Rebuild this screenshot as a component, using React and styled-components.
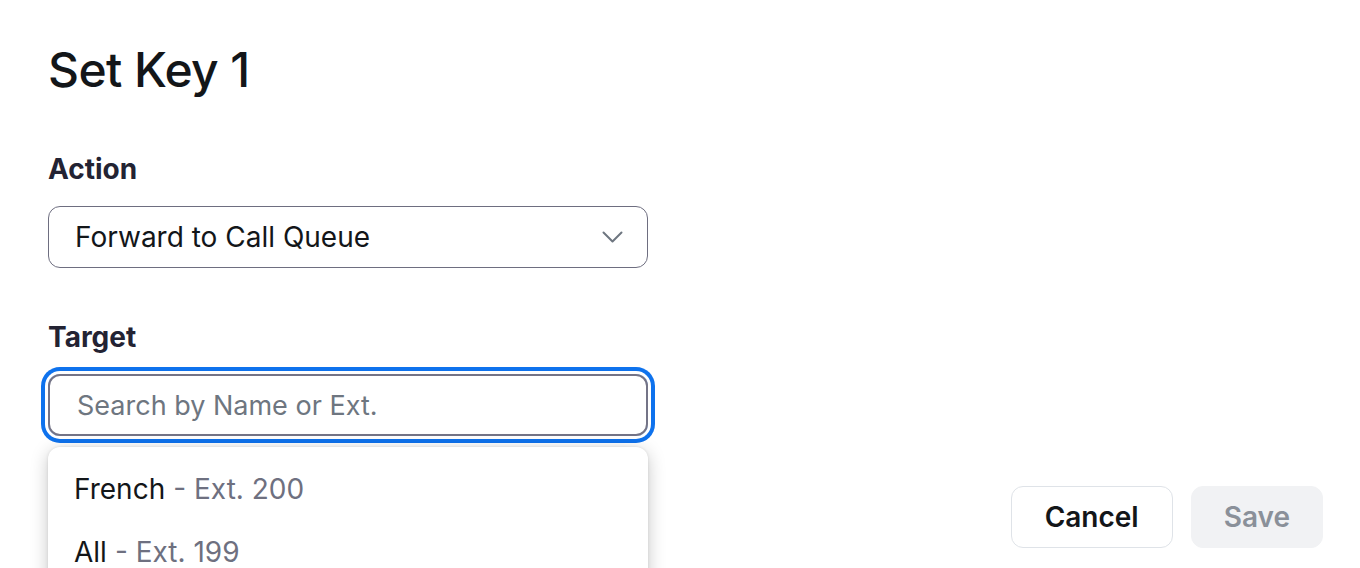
import styled, { createGlobalStyle } from "styled-components";

const GlobalStyle = createGlobalStyle`
    html, body {
        margin: 0;
        padding: 0;
        background: #ffffff;
        font-family: Inter, "Noto Sans", sans-serif;
        color: #131619;
        overflow: hidden;
    }
`

const Page = styled.div`
    display: flex;
    flex-direction: column;
    padding: 38px 37px 0 48px;
    height: 568px;
    box-sizing: border-box;
`

const Title = styled.h1`
    margin: 0;
    font-size: 48px;
    font-weight: 500;
    letter-spacing: -0.6px;
    line-height: 64px;
    color: #131619;
`

const Field = styled.div`
    display: flex;
    flex-direction: column;
    width: 600px;
    margin-top: ${(p) => p.$top}px;
    position: relative;
`

const Label = styled.label`
    font-size: 28px;
    font-weight: 700;
    line-height: 34px;
    color: #232333;
    margin-bottom: 20px;
`

const SelectBox = styled.div`
    display: flex;
    align-items: center;
    justify-content: space-between;
    height: 62px;
    box-sizing: border-box;
    padding: 0 24px 0 26px;
    border: 1.5px solid #6e6e80;
    border-radius: 12px;
    font-size: 28px;
    color: #131619;
`

const InputWrap = styled.div`
    border-radius: 12px;
    box-shadow: 0 0 0 3px #ffffff, 0 0 0 7px #0e72ed;
`

const SearchInput = styled.input`
    display: block;
    width: 100%;
    height: 62px;
    box-sizing: border-box;
    padding: 0 27px;
    border: 2px solid #747487;
    border-radius: 12px;
    font-family: Inter, "Noto Sans", sans-serif;
    font-size: 27px;
    color: #131619;
    outline: none;

    &::placeholder {
        color: #6e7680;
    }
`

const Menu = styled.ul`
    position: absolute;
    left: 0;
    right: 0;
    top: 100%;
    margin: 11px 0 0 0;
    padding: 10px 0;
    list-style: none;
    background: #ffffff;
    border-radius: 12px;
    box-shadow: 0 4px 18px rgba(0, 0, 0, 0.22), 0 0 3px rgba(0, 0, 0, 0.1);
    z-index: 2;
`

const MenuItem = styled.li`
    display: flex;
    align-items: center;
    height: 63px;
    padding: 0 26px;
    font-size: 28px;
    color: #131619;
`

const Ext = styled.span`
    color: #6e7080;
    margin-left: 8px;
`

const Footer = styled.div`
    display: flex;
    justify-content: flex-end;
    gap: 18px;
    margin-top: 50px;
`

const Button = styled.button`
    height: 62px;
    padding: 0 ${(p) => (p.$primary ? 32 : 33)}px;
    border-radius: 12px;
    font-family: Inter, "Noto Sans", sans-serif;
    font-size: 28px;
    font-weight: 600;
    border: 1.5px solid ${(p) => (p.$primary ? "#f1f2f4" : "#dfe3e8")};
    background: ${(p) => (p.$primary ? "#f1f2f4" : "#ffffff")};
    color: ${(p) => (p.$primary ? "#8a9099" : "#131619")};
`

function Chevron() {
    return (
        <svg width="21" height="12" viewBox="0 0 21 12" fill="none">
            <path d="M1.5 1.5 L10.5 10.5 L19.5 1.5" stroke="#6e7680" strokeWidth="2" strokeLinecap="round" strokeLinejoin="round" />
        </svg>
    )
}

const options = [
    { name: "French", ext: "200" },
    { name: "All", ext: "199" },
]

export default function App() {
    return (
        <>
            <GlobalStyle />
            <Page>
                <Title>Set Key 1</Title>
                <Field $top={50}>
                    <Label>Action</Label>
                    <SelectBox>
                        <span>Forward to Call Queue</span>
                        <Chevron />
                    </SelectBox>
                </Field>
                <Field $top={52}>
                    <Label>Target</Label>
                    <InputWrap>
                        <SearchInput placeholder="Search by Name or Ext." />
                    </InputWrap>
                    <Menu>
                        {options.map((o) => (
                            <MenuItem key={o.ext}>
                                {o.name}
                                <Ext>- Ext. {o.ext}</Ext>
                            </MenuItem>
                        ))}
                    </Menu>
                </Field>
                <Footer>
                    <Button>Cancel</Button>
                    <Button $primary>Save</Button>
                </Footer>
            </Page>
        </>
    )
}
